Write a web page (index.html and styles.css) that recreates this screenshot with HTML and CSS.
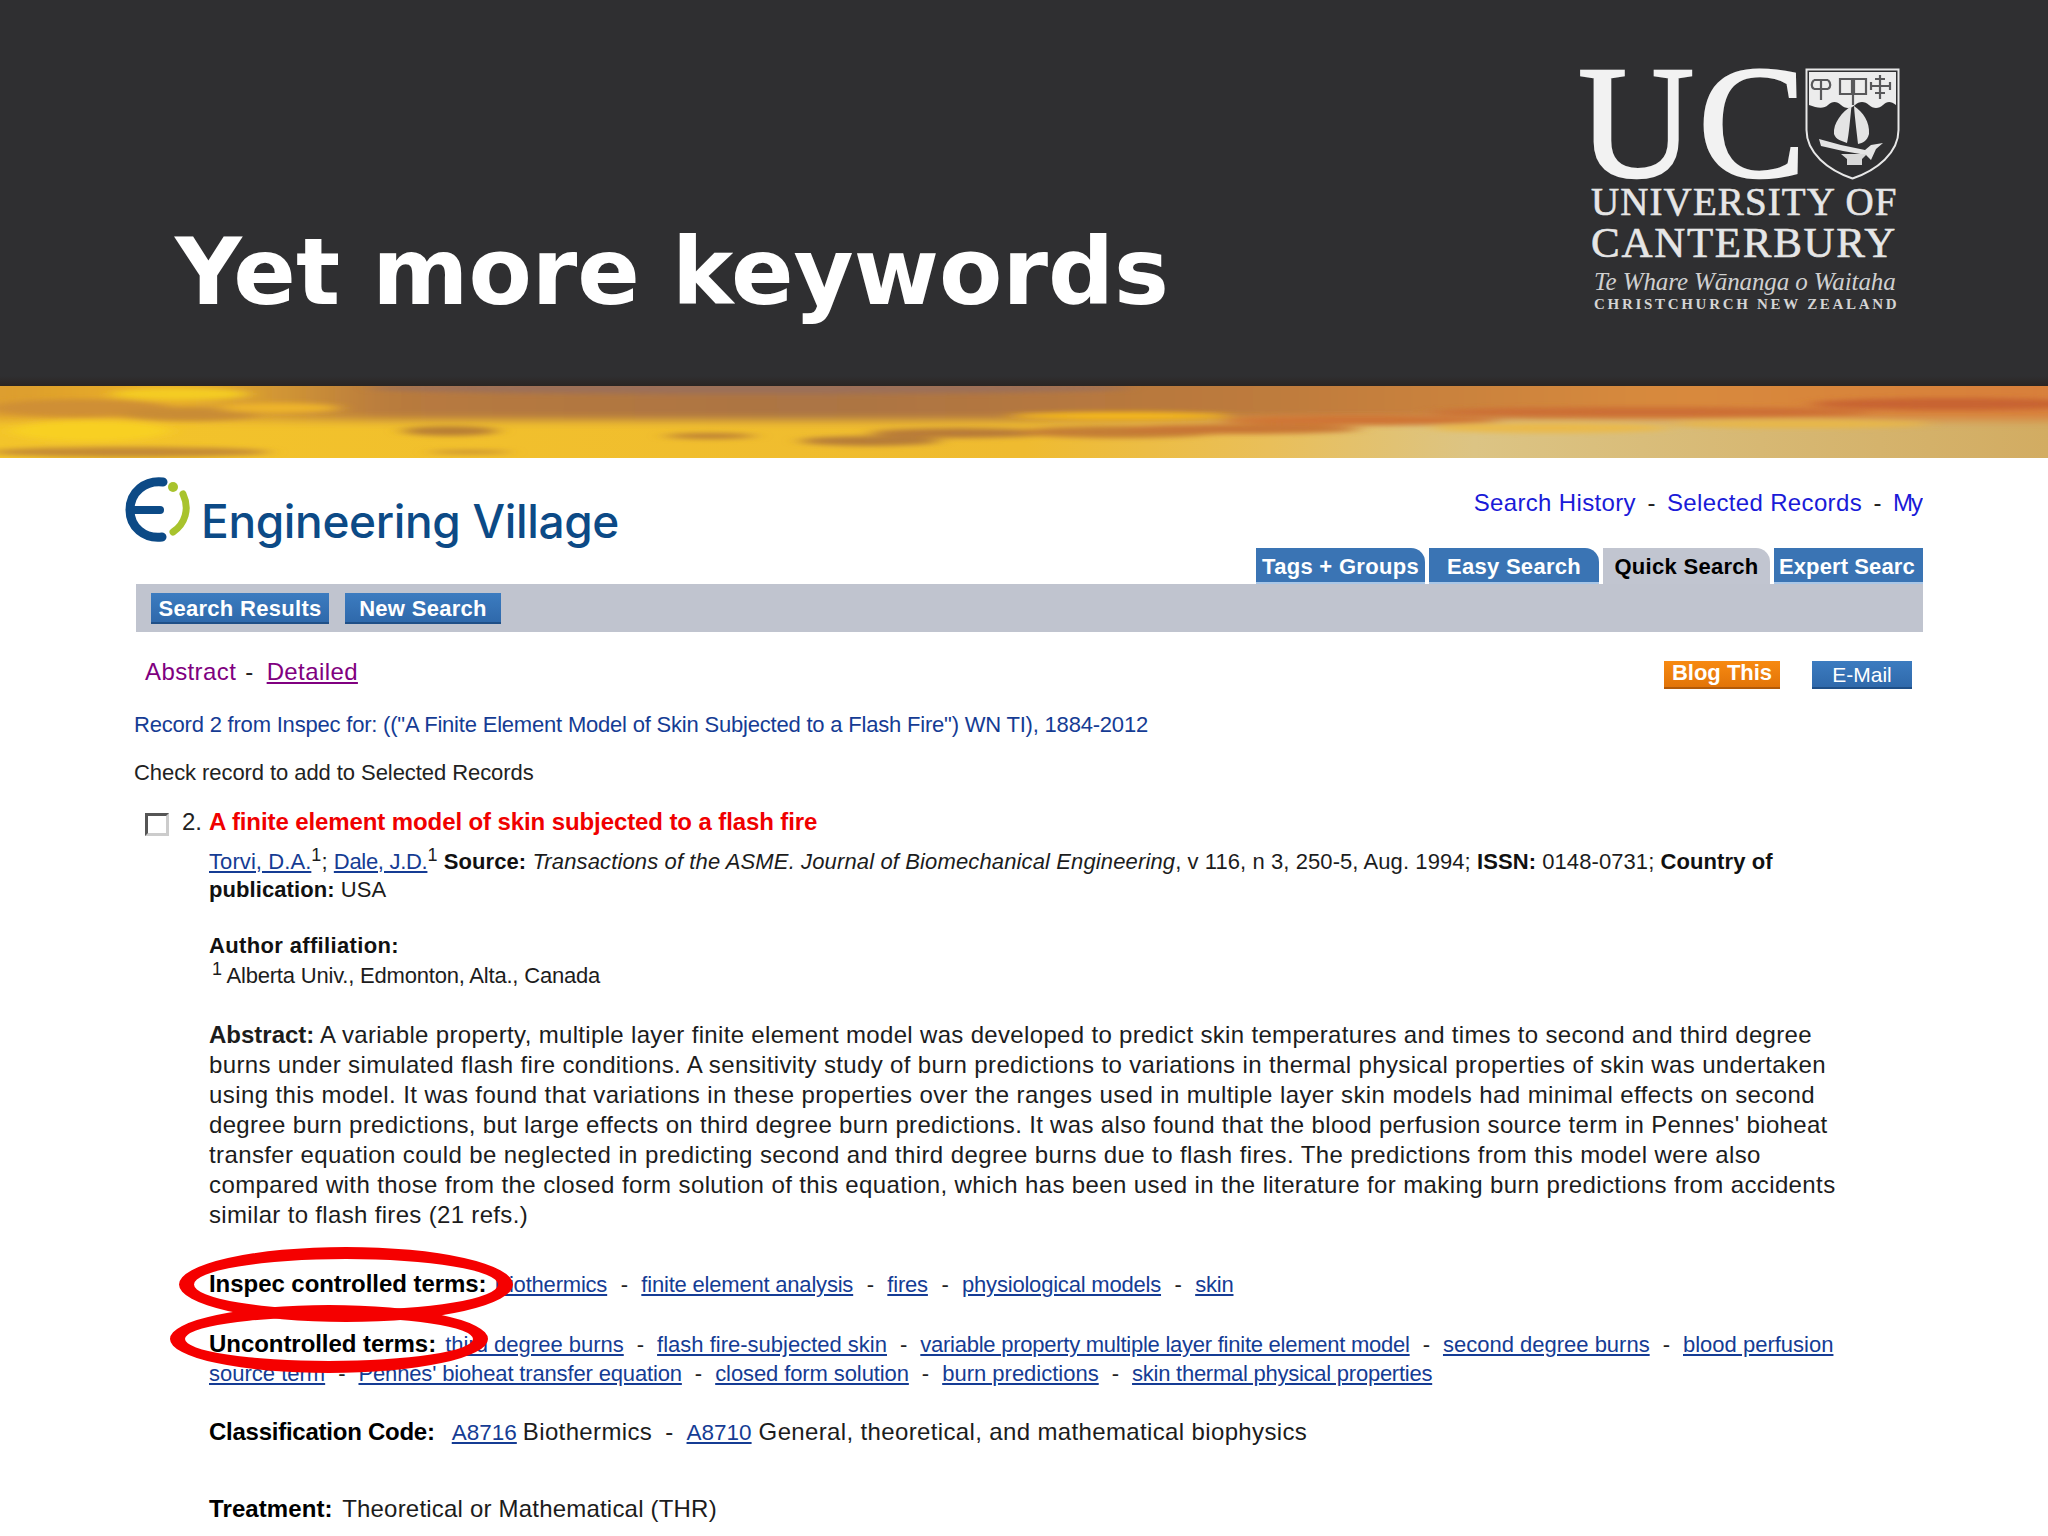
FILE: index.html
```html
<!DOCTYPE html>
<html lang="en">
<head>
<meta charset="utf-8">
<title>Yet more keywords</title>
<link rel="stylesheet" href="styles.css">
</head>
<body>
<div class="slide">
  <header class="head">
    <h1 class="title">Yet more keywords</h1>
    <div class="uc">
      <div class="uc-top">
        <span class="uc-mark">UC</span>
        <svg class="shield" viewBox="0 0 95 112" aria-hidden="true">
          <path d="M1.5 1.5H93.5V62C93.5 85 72 102 47.5 110.500C23 102 1.500 85 1.500 62Z" fill="#2f2f31" stroke="#e8e8e8" stroke-width="2"/>
          <path d="M4 4H91V37C86 33 82 33 78 37C74 41 68 41 64 37C60 33 54 33 50 37C46 41 40 41 36 37C32 33 27 33 23 37C19 41 12 40 4 37Z" fill="#ececec"/>
          <g fill="none" stroke="#58585a" stroke-width="2.200">
            <path d="M16 12V32M9 12H23M9 12C6 15 6 19 9 21M23 12C26 15 26 19 23 21M9 21H23"/>
            <path d="M75 7V31M66 18H85M70 11H80M70 25H80M66 14V22M85 14V22"/>
            <path d="M35 11H47V26H35ZM49 11H61V26H49Z"/>
            <path d="M48 27V37"/>
          </g>
          <path d="M46.500 38C37 44 28 55 29 66C31 72 37 73 42 75C44 66 45 52 46.500 38Z" fill="#e4e4e4"/>
          <path d="M49 38C58 44 65 54 64 66C62 73 58 75 53 76C52 66 50 52 49 38Z" fill="#e4e4e4"/>
          <path d="M14 71L36 77L60 82L66 77L78 75L71 81L66 92L61 87L38 83L16 78Z" fill="#e4e4e4"/>
          <path d="M36 86H62L57 91V97H42V91Z" fill="#d8d8d8"/>
        </svg>
      </div>
      <div class="uc-name">UNIVERSITY OF</div>
      <div class="uc-place">CANTERBURY</div>
      <div class="uc-maori">Te Whare Wānanga o Waitaha</div>
      <div class="uc-city">CHRISTCHURCH NEW ZEALAND</div>
    </div>
  </header>

  <svg class="band" viewBox="0 0 2048 72" preserveAspectRatio="none" aria-hidden="true">
    <defs>
      <linearGradient id="base" x1="0" x2="1" y1="0" y2="0">
        <stop offset="0" stop-color="#f3c42a"/>
        <stop offset=".5" stop-color="#efbb30"/>
        <stop offset=".62" stop-color="#e9bf5a"/>
        <stop offset=".72" stop-color="#dcc484"/>
        <stop offset="1" stop-color="#d2ac62"/>
      </linearGradient>
      <linearGradient id="dusk" x1="0" x2="1" y1="0" y2="0">
        <stop offset="0" stop-color="#d9982e"/>
        <stop offset=".1" stop-color="#eab02a"/>
        <stop offset=".2" stop-color="#b87a3e"/>
        <stop offset=".4" stop-color="#ab7444"/>
        <stop offset=".6" stop-color="#bc7a3c"/>
        <stop offset=".8" stop-color="#d88a3c"/>
        <stop offset="1" stop-color="#d87e3a"/>
      </linearGradient>
      <filter id="soft" x="-20%" y="-80%" width="140%" height="260%"><feGaussianBlur stdDeviation="9 2.500"/></filter>
      <filter id="softer" x="-20%" y="-80%" width="140%" height="260%"><feGaussianBlur stdDeviation="24 5"/></filter>
    </defs>
    <rect width="2048" height="72" fill="url(#base)"/>
    <rect x="-40" y="-10" width="2130" height="44" fill="url(#dusk)" filter="url(#softer)"/>
    <g filter="url(#soft)">
      <ellipse cx="750" cy="2" rx="380" ry="6" fill="#9c7058"/>
      <ellipse cx="80" cy="22" rx="90" ry="9" fill="#cf8f34"/>
      <ellipse cx="180" cy="8" rx="70" ry="6" fill="#f4cc22"/>
      <ellipse cx="190" cy="28" rx="70" ry="7" fill="#c98c35"/>
      <ellipse cx="90" cy="45" rx="80" ry="10" fill="#f8d024"/>
      <ellipse cx="130" cy="66" rx="140" ry="5" fill="#c48a34"/>
      <ellipse cx="280" cy="22" rx="60" ry="5" fill="#eeb42c"/>
      <ellipse cx="450" cy="45" rx="48" ry="5" fill="#b87e34"/>
      <ellipse cx="470" cy="66" rx="40" ry="2" fill="#c89030"/>
      <ellipse cx="710" cy="50" rx="45" ry="3" fill="#bc8034"/>
      <ellipse cx="870" cy="55" rx="70" ry="5" fill="#b67c38"/>
      <ellipse cx="960" cy="47" rx="90" ry="5" fill="#b87a38"/>
      <ellipse cx="1120" cy="46" rx="100" ry="6" fill="#c47e34"/>
      <ellipse cx="1120" cy="30" rx="110" ry="4" fill="#f4b81e"/>
      <ellipse cx="1360" cy="34" rx="140" ry="5" fill="#cf7434"/>
      <ellipse cx="1240" cy="43" rx="120" ry="5" fill="#c87636"/>
      <ellipse cx="1650" cy="26" rx="220" ry="5" fill="#cc6e34"/>
      <ellipse cx="1950" cy="18" rx="140" ry="6" fill="#c86432"/>
      <ellipse cx="1550" cy="42" rx="120" ry="5" fill="#eab94c"/>
      <ellipse cx="1800" cy="38" rx="130" ry="4" fill="#e8b848"/>
    </g>
  </svg>

  <main class="page">
    <div class="top">
      <div class="brand">
        <svg class="ei" viewBox="0 0 65 65" aria-hidden="true">
          <path d="M38 5C20 3 5 15 5 33C5 50 19 62 37 60" fill="none" stroke="#0c4a86" stroke-width="9" stroke-linecap="round"/>
          <path d="M6 33H35" fill="none" stroke="#0c4a86" stroke-width="8" stroke-linecap="round"/>
          <circle cx="48" cy="10" r="5" fill="#a8c32d"/>
          <path d="M58 17C65 32 60 47 48 55" fill="none" stroke="#a8c32d" stroke-width="7" stroke-linecap="round"/>
        </svg>
        <span class="brand-name">Engineering Village</span>
      </div>
      <div class="top-right">
        <nav class="links"><a class="link-top">Search History</a><span class="dash">-</span><a class="link-top">Selected Records</a><span class="dash">-</span><a class="link-top link-my">My</a></nav>
        <nav class="tabs">
          <span class="tab tab-tags">Tags + Groups</span>
          <span class="tab tab-easy">Easy Search</span>
          <span class="tab tab-quick">Quick Search</span>
          <span class="tab tab-expert">Expert Searc</span>
        </nav>
      </div>
    </div>
    <div class="bar">
      <span class="btn btn-results">Search Results</span>
      <span class="btn btn-new">New Search</span>
    </div>
    <div class="views">
      <div class="view-links"><span class="plain">Abstract</span><span class="view-dash">-</span><a class="plain under">Detailed</a></div>
      <div class="actions">
        <span class="action orange">Blog This</span>
        <span class="action blue">E-Mail</span>
      </div>
    </div>
    <p class="record">Record 2 from Inspec for: (("A Finite Element Model of Skin Subjected to a Flash Fire") WN TI), 1884-2012</p>
    <p class="check-note">Check record to add to Selected Records</p>
    <div class="heading">
      <span class="box"></span>
      <span class="num">2.</span>
      <span class="rec-title">A finite element model of skin subjected to a flash fire</span>
    </div>
    <div class="body">
      <p class="cite"><a class="lnk">Torvi, D.A.</a><sup>1</sup>; <a class="lnk author-b">Dale, J.D.</a><sup>1</sup> <b>Source:</b> <i>Transactions of the ASME. Journal of Biomechanical Engineering</i>, v 116, n 3, 250-5, Aug. 1994; <b>ISSN:</b> 0148-0731; <b>Country of<br>publication:</b> USA</p>
      <p class="aff-label"><b>Author affiliation:</b></p>
      <p class="aff"><sup class="aff-mark">1</sup> Alberta Univ., Edmonton, Alta., Canada</p>
      <p class="abstract"><b>Abstract:</b> A variable property, multiple layer finite element model was developed to predict skin temperatures and times to second and third degree<br><span class="mid">burns under simulated flash fire conditions. A sensitivity study of burn predictions to variations in thermal physical properties of skin was undertaken</span><br><span class="wide-more">using this model. It was found that variations in these properties over the ranges used in multiple layer skin models had minimal effects on second</span><br>degree burn predictions, but large effects on third degree burn predictions. It was also found that the blood perfusion source term in Pennes' bioheat<br><span class="wide">transfer equation could be neglected in predicting second and third degree burns due to flash fires. The predictions from this model were also</span><br><span class="wide">compared with those from the closed form solution of this equation, which has been used in the literature for making burn predictions from accidents</span><br>similar to flash fires (21 refs.)</p>
      <p class="terms-a"><b class="term-label">Inspec controlled terms:</b> <a class="lnk first">Biothermics</a><span class="sep">-</span><a class="lnk">finite element analysis</a><span class="sep">-</span><a class="lnk">fires</a><span class="sep">-</span><a class="lnk">physiological models</a><span class="sep">-</span><a class="lnk">skin</a></p>
      <p class="terms-b"><b class="term-label">Uncontrolled terms:</b> <a class="lnk first-b">third degree burns</a><span class="sep">-</span><a class="lnk">flash fire-subjected skin</a><span class="sep">-</span><a class="lnk tight-more">variable property multiple layer finite element model</a><span class="sep">-</span><a class="lnk">second degree burns</a><span class="sep">-</span><a class="lnk">blood perfusion<br>source term</a><span class="sep">-</span><a class="lnk tight-a">Pennes' bioheat transfer equation</a><span class="sep">-</span><a class="lnk tight">closed form solution</a><span class="sep">-</span><a class="lnk">burn predictions</a><span class="sep">-</span><a class="lnk tight-more">skin thermal physical properties</a></p>
      <p class="classif"><b class="term-label">Classification Code:</b> <a class="lnk code">A8716</a> Biothermics<span class="sep">-</span><a class="lnk code-b">A8710</a> General, theoretical, and mathematical biophysics</p>
      <p class="treat"><b class="term-label treat-label">Treatment:</b> Theoretical or Mathematical (THR)</p>
    </div>
  </main>
  <div class="ring ring-a"></div>
  <div class="ring ring-b"></div>
</div>
</body>
</html>
```
FILE: styles.css
```css
html, body { margin: 0; padding: 0; background: #fff; }
.slide { position: relative; width: 2048px; height: 1536px; overflow: hidden; background: #fff; font-family: "Liberation Sans", Arial, sans-serif; color: #151515; }
p { margin: 0; }

.head { height: 386px; box-sizing: border-box; background: linear-gradient(#2f2f31 0, #2f2f31 376px, #2b2522 386px); display: flex; justify-content: space-between; align-items: flex-start; padding: 65px 148px 0 175px; }
.title { margin: 161px 0 0; font: 700 92.300px/1 "DejaVu Sans", Verdana, sans-serif; color: #fff; white-space: nowrap; }

.uc { width: 320px; color: #e6e6e6; font-family: "Liberation Serif", "Times New Roman", serif; white-space: nowrap; }
.uc-top { display: flex; align-items: flex-start; height: 116px; }
.uc-mark { font-size: 161px; line-height: 114px; letter-spacing: 4px; color: #f2f2f2; width: 226px; margin-left: -2px; -webkit-text-stroke: 2.500px #f2f2f2; }
.shield { width: 95px; height: 112px; flex: none; margin-top: 3px; margin-left: 1px; }
.uc-name { font-size: 39px; line-height: 36px; margin: 3px 0 0 11px; letter-spacing: 1.100px; -webkit-text-stroke: .6px #e6e6e6; }
.uc-place { font-size: 43px; line-height: 43px; margin: 1px 0 0 11px; letter-spacing: 1.700px; -webkit-text-stroke: .6px #e6e6e6; }
.uc-maori { font-size: 25px; font-style: italic; line-height: 26px; margin: 5px 0 0 14px; letter-spacing: -.1px; color: #d0d0d0; }
.uc-city { font-size: 15px; line-height: 16px; margin: 1px 0 0 14px; letter-spacing: 2.700px; font-weight: 700; color: #d4d4d4; }

.band { display: block; width: 2048px; height: 72px; }

.page { width: 1923px; }
.top { display: flex; justify-content: space-between; height: 126px; padding-left: 125px; }
.brand { display: flex; align-items: flex-start; padding-top: 19px; }
.ei { width: 65px; height: 65px; flex: none; }
.brand-name { font: 500 46px/56px Inter, Lato, sans-serif; letter-spacing: -.35px; color: #0c4a86; margin: 16px 0 0 11px; white-space: nowrap; }
.top-right { width: 667px; display: flex; flex-direction: column; align-items: flex-end; overflow: hidden; }
.links { height: 90px; box-sizing: border-box; padding-top: 30px; font-size: 24px; line-height: 30px; white-space: nowrap; }
.link-top { color: #1a1ad8; letter-spacing: .35px; }
.link-my { letter-spacing: -2px; margin-right: 2px; }
.dash { margin: 0 11.500px; color: #222; }
.tabs { display: flex; height: 36px; gap: 4px; width: 667px; }
.tab { flex: none; box-sizing: border-box; height: 36px; background: #3a74b4; color: #fff; font-weight: 700; font-size: 22px; line-height: 37px; border-top-right-radius: 14px; white-space: nowrap; text-align: center; border-bottom: 2px solid #a9c6e6; letter-spacing: .3px; }
.tab-tags { width: 169px; }
.tab-easy { width: 170px; }
.tab-quick { width: 167px; background: #c1c5d0; color: #000; border-bottom: 0; }
.tab-expert { width: 149px; border-top-right-radius: 0; text-align: left; padding-left: 5px; letter-spacing: .1px; }

.bar { height: 48px; margin-left: 136px; background: #c0c4cf; display: flex; align-items: flex-start; gap: 16px; padding: 9px 0 0 15px; box-sizing: border-box; }
.btn { box-sizing: border-box; height: 31px; background: linear-gradient(#3c7cc0, #2f69ab); border-bottom: 2px solid #1f4f87; color: #fff; font-weight: 700; font-size: 22px; line-height: 31px; text-align: center; white-space: nowrap; letter-spacing: .3px; }
.btn-results { width: 178px; }
.btn-new { width: 156px; }

.views { height: 29px; margin: 28px 11px 0 145px; display: flex; justify-content: space-between; align-items: center; }
.view-links { font-size: 24px; line-height: 24px; color: #800080; margin-top: -6px; letter-spacing: .4px; }
.view-dash { color: #222; margin: 0 13px 0 9px; }
.under { text-decoration: underline; }
.actions { display: flex; gap: 32px; }
.action { box-sizing: border-box; height: 28px; text-align: center; white-space: nowrap; color: #fff; }
.orange { width: 116px; background: linear-gradient(#f78a12, #e27408); font-weight: 700; font-size: 22px; line-height: 24px; border-bottom: 2px solid #b35a08; }
.blue { width: 100px; background: linear-gradient(#3c7cc0, #2f69ab); font-size: 21px; line-height: 28px; border-bottom: 2px solid #1f4f87; }

.record { margin: 21px 0 0 134px; font-size: 22px; line-height: 30px; color: #153c94; white-space: nowrap; letter-spacing: -.2px; }
.check-note { margin: 18px 0 0 134px; font-size: 22px; line-height: 30px; white-space: nowrap; color: #222; letter-spacing: -.07px; }
.heading { margin: 19px 0 0 145px; height: 30px; display: flex; align-items: center; white-space: nowrap; }
.box { box-sizing: border-box; width: 24px; height: 23px; flex: none; margin-top: 4px; background: #fff; border: 3px solid; border-color: #555 #ccc #ccc #555; }
.num { font-size: 24px; width: 40px; text-align: right; padding-right: 7px; box-sizing: border-box; color: #222; }
.rec-title { font-size: 24px; font-weight: 700; color: #f00000; letter-spacing: -.1px; }

.body { margin: 11px 0 0 209px; white-space: nowrap; color: #1c1c1c; }
.cite { font-size: 22px; line-height: 28px; letter-spacing: .08px; }
.cite b, .aff-label b { color: #111; }
.cite i { letter-spacing: .13px; }
.lnk { color: #153c94; text-decoration: underline; }
.author-b { letter-spacing: -.3px; }
sup { font-size: 18px; line-height: 0; }
.aff-label { margin-top: 28px; font-size: 22px; line-height: 28px; letter-spacing: .35px; }
.aff { margin-top: 2px; font-size: 22px; line-height: 28px; letter-spacing: -.2px; }
.aff-mark { margin-left: 3px; }
.abstract { margin-top: 30px; font-size: 24px; line-height: 30px; letter-spacing: .33px; }
.abstract b { letter-spacing: 0; }
.mid { letter-spacing: .36px; }
.wide { letter-spacing: .39px; }
.wide-more { letter-spacing: .41px; }
.terms-a { margin-top: 39px; font-size: 22px; line-height: 30px; letter-spacing: -.2px; }
.terms-a .sep { margin: 0 13.500px; }
.first { margin-left: 2px; }
.terms-b { margin-top: 29px; font-size: 22px; line-height: 29px; }
.first-b { margin-left: 3px; }
.tight-more { letter-spacing: -.25px; }
.tight-a { letter-spacing: -.15px; }
.tight { letter-spacing: -.1px; }
.classif { margin-top: 29px; font-size: 24px; line-height: 30px; letter-spacing: .36px; }
.treat { margin-top: 46px; font-size: 24px; line-height: 30px; letter-spacing: .2px; }
.term-label { font-size: 24px; color: #000; letter-spacing: -.05px; }
.classif .term-label { letter-spacing: -.25px; }
.treat-label { letter-spacing: .1px; margin-right: 3px; }
.sep { margin: 0 13px; color: #222; }
.code { margin-left: 10px; margin-right: -1px; font-size: 22.500px; letter-spacing: 0; }
.code-b { font-size: 22.500px; letter-spacing: 0; }

.ring { position: absolute; box-sizing: border-box; border-style: solid; border-color: #f50000; border-width: 12px 15px; border-radius: 50%; }
.ring-a { left: 179px; top: 1247px; width: 334px; height: 75px; }
.ring-b { left: 170px; top: 1305px; width: 318px; height: 68px; }
```
